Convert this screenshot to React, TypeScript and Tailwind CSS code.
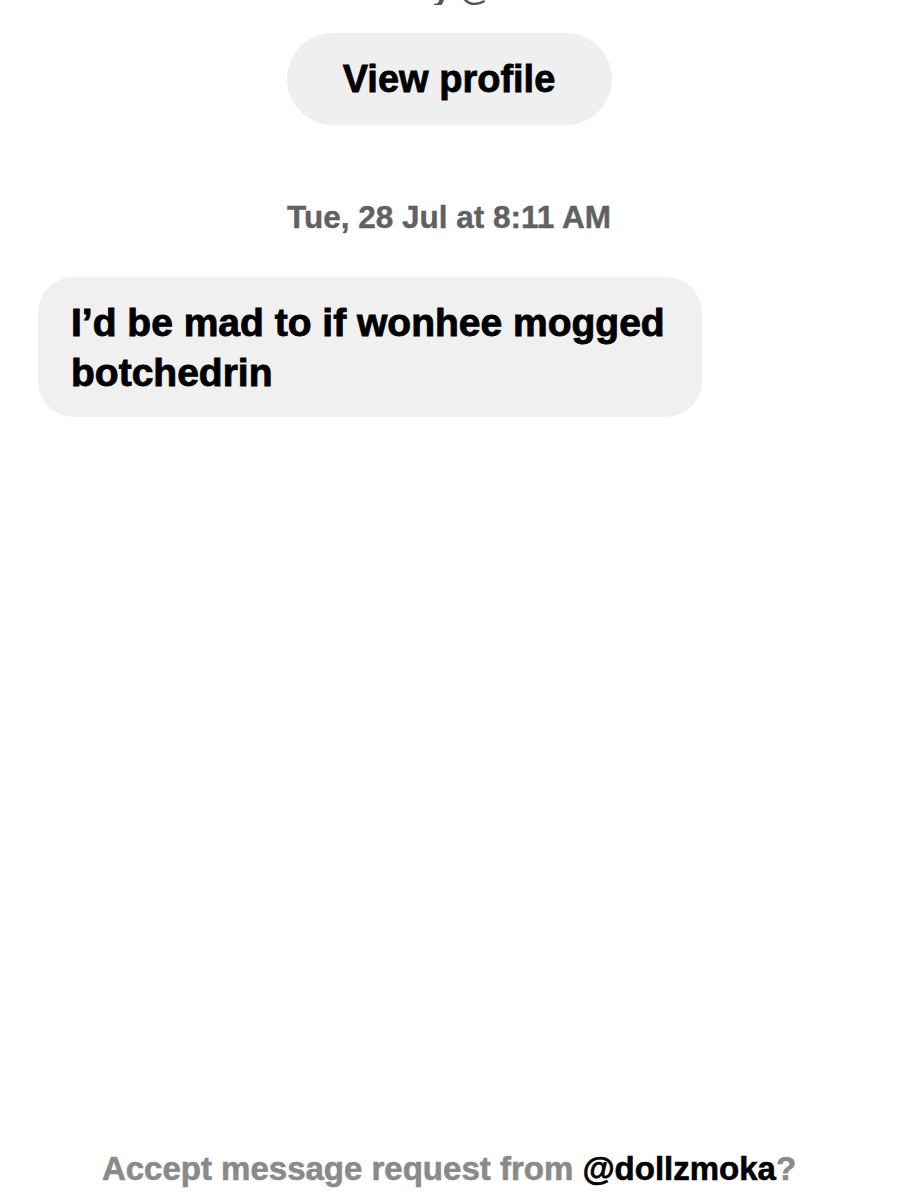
// Message request thread view

const sans = { fontFamily: '"Liberation Sans", Arial, sans-serif' };

function CutOffHeader() {
    // only the descenders of the profile line are visible at the top edge
    return (
        <div className="h-[5px] overflow-hidden flex items-end justify-center">
            <span className="text-[33px] leading-none font-bold text-[#555] pl-[6px]">by @</span>
        </div>
    );
}

export default function App() {
    return (
        <div style={sans} className="w-full h-[1200px] bg-white flex flex-col">
            <CutOffHeader />

            <button className="mt-[28px] mx-auto w-[325px] h-[92px] rounded-full bg-[#efefef] flex items-center justify-center text-[38px] font-bold text-black [-webkit-text-stroke:0.8px_black]">
                View profile
            </button>

            <div className="mt-[77px] text-center text-[31.5px] leading-none font-bold text-[#616161] [-webkit-text-stroke:0.4px_#616161]">
                Tue, 28 Jul at 8:11 AM
            </div>

            <div className="mt-[43px] ml-[38px] w-[664px] rounded-[36px] bg-[#f0f0f0] pl-[33px] pr-[24px] pt-[21px] pb-[19px]">
                <p className="text-[39px] leading-[50px] font-bold text-black [-webkit-text-stroke:0.9px_black]">
                    I’d be mad to if wonhee mogged botchedrin
                </p>
            </div>

            <div className="mt-auto pb-[15px] text-center text-[33px] leading-none font-bold text-[#8a8a8a] [-webkit-text-stroke:0.6px_#8a8a8a]">
                Accept message request from <span className="text-black [-webkit-text-stroke:0.6px_black]">@dollzmoka</span>?
            </div>
        </div>
    );
}
